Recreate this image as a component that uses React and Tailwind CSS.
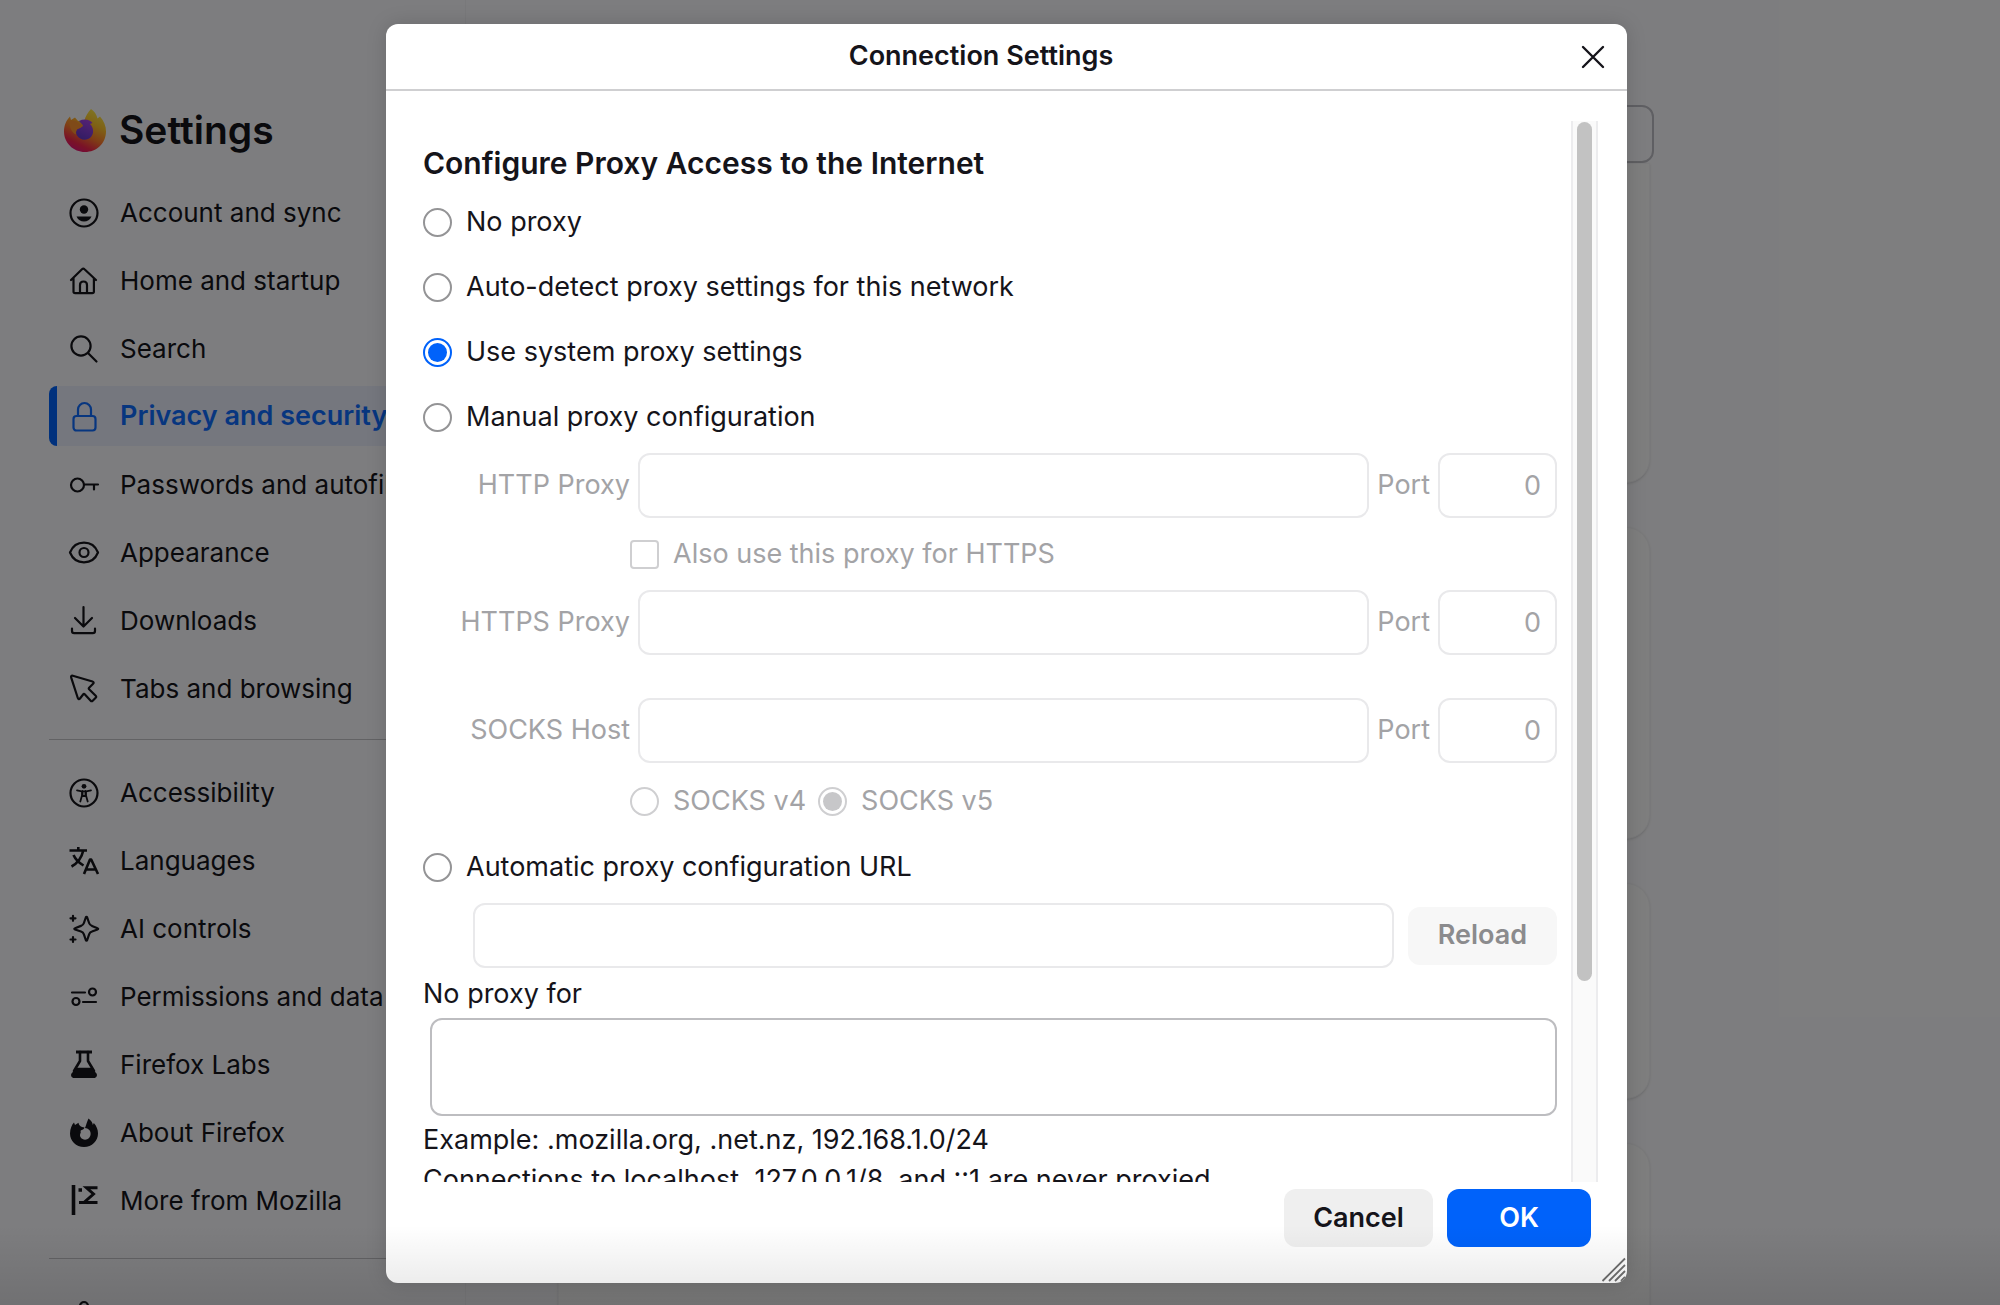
import React, { useState } from 'react';

const Icon = ({ children, size = 28 }) => (
  <svg
    width={size}
    height={size}
    viewBox="0 0 28 28"
    fill="none"
    stroke="currentColor"
    strokeWidth="2.2"
    strokeLinecap="round"
    strokeLinejoin="round"
    className="shrink-0 overflow-visible"
    aria-hidden="true"
  >
    {children}
  </svg>
);

const icons = {
  account: (
    <Icon>
      <circle cx="14" cy="14" r="13.500" />
      <circle cx="14" cy="10.500" r="4.200" fill="currentColor" stroke="none" />
      <path d="M6.500 17.500h15c-1.400 3.200-4.200 5-7.500 5s-6.100-1.800-7.500-5z" fill="currentColor" stroke="none" />
    </Icon>
  ),
  home: (
    <Icon>
      <path d="M1 13 12 2.200c.8-.8 1.700-.8 2.500 0L26 13M3.500 11v13.500c0 1 .7 1.700 1.700 1.700h17c1 0 1.700-.7 1.700-1.700V11" />
      <path d="M10 26v-8c0-2 1.300-3.500 3.500-3.500S17 16 17 18v8" />
    </Icon>
  ),
  search: (
    <Icon>
      <circle cx="11" cy="11" r="9.600" />
      <path d="m18 18 8.500 8.500" />
    </Icon>
  ),
  lock: (
    <Icon>
      <rect x="3.500" y="13" width="22" height="14.500" rx="3" />
      <path d="M8 13V6.500a6.500 6.500 0 0 1 13 0V13" />
    </Icon>
  ),
  key: (
    <Icon>
      <circle cx="7.500" cy="14" r="6.500" />
      <path d="M14 13.500h14M24 13.500v5" />
    </Icon>
  ),
  eye: (
    <Icon>
      <path d="M0 13.500C2.500 7.300 8 3.700 14 3.700s11.500 3.600 14 9.800C25.500 19.700 20 23.300 14 23.300S2.500 19.700 0 13.500z" />
      <circle cx="14" cy="13.500" r="4.500" />
    </Icon>
  ),
  download: (
    <Icon>
      <path d="M13.500 0v18.500M5 11l8.500 8.500L22 11M2 21.500V24c0 1.300.9 2.200 2.200 2.200h18.600c1.300 0 2.200-.9 2.200-2.200v-2.500" />
    </Icon>
  ),
  cursor: (
    <Icon>
      <path d="M2.800.8 22.500 6.500c1.300.4 1.500 1.400.6 2.200l-4 4c-.5.5-.5 1 0 1.500l6.600 6.500c.7.700.7 1.400 0 2l-3 3c-.7.700-1.400.7-2 0l-6-6.500c-.5-.5-1-.4-1.400.1L10 23.500c-.8 1-1.800.8-2.200-.5L1.200 2.600C.8 1.300 1.500.400 2.800.8z" />
    </Icon>
  ),
  accessibility: (
    <Icon>
      <circle cx="14" cy="14" r="13.500" />
      <circle cx="14" cy="7.300" r="2.400" fill="currentColor" stroke="none" />
      <path d="M7 11.300l4.700 1h4.600l4.700-1M12 12.500v4l-1.700 6M16 12.500v4l1.700 6M12.500 12v5h3v-5" strokeWidth="1.800" />
    </Icon>
  ),
  languages: (
    <Icon>
      <path
        d="M-.5 3.500H17M8.300 0v3.500M13.300 3.500C11.800 10 8 16 1.500 19.500M3.500 8c2 4.500 5 7.500 10 10.500"
        strokeWidth="2.600"
        strokeLinecap="butt"
      />
      <path d="m14 27 6-14.500h1.200L28 27M16.300 22.500h9.500" strokeWidth="2.600" strokeLinecap="butt" />
    </Icon>
  ),
  ai: (
    <Icon>
      <path d="M15.800 2.500c.4-1 1-1 1.400 0l1.900 5.500c.5 1.500 1.400 2.400 2.900 2.900l5.500 2.300c.9.300.9 1 0 1.300L22 16.500c-1.500.5-2.400 1.400-2.900 2.900l-1.900 5.600c-.4 1-1 1-1.400 0l-1.900-5.600c-.5-1.500-1.400-2.400-2.900-2.900L5 14.500c-.9-.3-.9-1 0-1.300l6-2.300c1.500-.5 2.400-1.400 2.900-2.900z" />
      <path d="M3 .8v5M.5 3.300h5M3 22v5M.5 24.500h5" />
    </Icon>
  ),
  permissions: (
    <Icon>
      <circle cx="22.500" cy="9" r="3.500" />
      <circle cx="6" cy="18.500" r="3.500" />
      <path d="M2 9.500h13M13 19h13" />
    </Icon>
  ),
  labs: (
    <Icon>
      <path d="M6 1h16" strokeWidth="3" strokeLinecap="butt" />
      <path d="M10 1v9L4 20M18 1v9l6 10" strokeWidth="2.600" />
      <path
        d="M6.500 16.800h15l5 5.700c1.200 2-.1 4.500-2.500 4.500H4c-2.400 0-3.700-2.500-2.500-4.500z"
        fill="currentColor"
        stroke="none"
      />
    </Icon>
  ),
  firefox: (
    <Icon>
      <path
        d="M18.500-.5c3 2.500 4 4 4.300 6.500l1-2C26.500 7 28 10.500 28 14.500 28 22 22 28 14 28S0 22 0 14.500C0 9.500 2 5.500 4 3.500L5 6l3.500-2.300c.3 2 1.300 3.300 3.500 4.300l2.500.5c-.4 1.800-1.600 2-3.300 2.800-.7.400-.7 1.200-.4 1.900-.8 2.200-1.300 3.300 0 5.300 1.700 2.500 5.700 3 8.200.5 2.300-2.300 2-6 .3-8-1-1.200-3-2-4.300-2C16 6.500 17 2.500 18.500-.5z"
        fill="currentColor"
        stroke="none"
      />
    </Icon>
  ),
  mozilla: (
    <Icon>
      <path d="M3.500-2v30" strokeWidth="3.600" strokeLinecap="butt" />
      <path d="M27.500.8H16.500l7 6.200-9.500 8.500h13.500M9 15.500h6" strokeWidth="3" strokeLinecap="butt" strokeLinejoin="miter" />
      <path d="M8.500 3h3.500" strokeWidth="3.500" strokeLinecap="butt" />
    </Icon>
  ),
  extensions: (
    <Icon>
      <path d="M3 9h7V5a4 4 0 0 1 8 0v4h7v17H3z" />
    </Icon>
  ),
};

const primaryNav = [
  { label: 'Account and sync', icon: 'account' },
  { label: 'Home and startup', icon: 'home' },
  { label: 'Search', icon: 'search' },
  { label: 'Privacy and security', icon: 'lock', active: true },
  { label: 'Passwords and autofill', icon: 'key' },
  { label: 'Appearance', icon: 'eye' },
  { label: 'Downloads', icon: 'download' },
  { label: 'Tabs and browsing', icon: 'cursor' },
];

const secondaryNav = [
  { label: 'Accessibility', icon: 'accessibility' },
  { label: 'Languages', icon: 'languages' },
  { label: 'AI controls', icon: 'ai' },
  { label: 'Permissions and data', icon: 'permissions' },
  { label: 'Firefox Labs', icon: 'labs' },
  { label: 'About Firefox', icon: 'firefox' },
  { label: 'More from Mozilla', icon: 'mozilla' },
];

const FirefoxLogo = () => (
  <svg width="44" height="44" viewBox="0 0 44 44" className="shrink-0" aria-hidden="true">
    <defs>
      <linearGradient id="fox" x1="0.85" y1="0" x2="0.35" y2="1">
        <stop offset="0" stopColor="#fff44f" />
        <stop offset="0.35" stopColor="#ffc22a" />
        <stop offset="0.62" stopColor="#ff7a2c" />
        <stop offset="0.85" stopColor="#f5264d" />
        <stop offset="1" stopColor="#e31577" />
      </linearGradient>
      <linearGradient id="globe" x1="0.7" y1="0" x2="0.3" y2="1">
        <stop offset="0" stopColor="#a845e8" />
        <stop offset="1" stopColor="#6438c8" />
      </linearGradient>
    </defs>
    <path
      d="M28 1c3 2 5.500 5 6.500 9.500L37 8.500c4 4.500 6 9.500 6 15C43 35.500 33.500 44 22 44S1 35 1 23.500C1 17 3.500 12 7 8.500l1 3.500 4-2.500 3 3.500 6 .5c1.500-5 4-9.500 7-12.500z"
      fill="url(#fox)"
    />
    <path
      d="M16 13c5-2.500 11-1.500 13.500 2L27 16c4 4 4 9.500 1 13-4 4-11 3.500-14-1.500-1-2-1.300-4-.5-6 1.500-1 4.500-1.500 6.500-3.500-1-2-2.500-3.500-4-5z"
      fill="url(#globe)"
    />
    <path d="M7 13c3.500-1 6.500 0 9 2.500l4 1.500c-1 2.500-4 3-6 4.500-.8 1.500-1.300 3-1 5-4-1.500-7.500-8-6-13.500z" fill="#ff9430" />
  </svg>
);

const NavItem = ({ label, icon, active }) => (
  <li>
    <a
      href="#"
      aria-current={active ? 'page' : undefined}
      className={
        active
          ? 'flex h-15 items-center gap-[22px] rounded-lg border-l-8 border-[#0062fa] bg-[#eaeefd] pt-px pl-[13px] text-[27px] font-semibold text-[#0f6cff]'
          : 'flex h-15 items-center gap-[22px] pt-px pl-[21px]'
      }
    >
      {icons[icon]}
      <span className="whitespace-nowrap">{label}</span>
    </a>
  </li>
);

const SettingsPage = () => (
  <div className="flex h-full overflow-hidden bg-[#fbfbfe]">
    <aside className="w-[466px] shrink-0 border-r border-[#f3f3f6] pl-[49px] pt-[104px] pr-9">
      <h1 className="flex h-13 items-center gap-3 pl-[14px] text-[39px] font-semibold">
        <FirefoxLogo />
        Settings
      </h1>
      <nav aria-label="Settings" className="mt-[26px] text-[26px]">
        <ul className="flex flex-col gap-2">
          {primaryNav.map((item) => (
            <NavItem key={item.label} {...item} />
          ))}
        </ul>
        <hr className="mt-[21px] mb-[22px] border-[#c4c4c8]" />
        <ul className="flex flex-col gap-2">
          {secondaryNav.map((item) => (
            <NavItem key={item.label} {...item} />
          ))}
        </ul>
        <hr className="mt-7 border-[#c4c4c8]" />
        <div className="mt-[42px] pl-[21px]">{icons.extensions}</div>
      </nav>
    </aside>

    <main className="flex-1 pl-[92px] pr-[346px] pt-[105px]">
      <input
        type="search"
        aria-label="Search settings"
        className="block h-[58px] w-full rounded-xl border-2 border-[#bfbfc6]"
      />
      <div className="mr-1 flex flex-col gap-11">
        <section className="h-[320px] rounded-b-3xl border border-[#f4f4f6] bg-[#fdfdfd] shadow-sm" />
        <section className="h-[312px] rounded-3xl border border-[#f4f4f6] bg-[#fdfdfd] shadow-sm" />
        <section className="h-[216px] rounded-3xl border border-[#f4f4f6] bg-[#fdfdfd] shadow-sm" />
        <section className="h-[216px] rounded-3xl border border-[#f4f4f6] bg-[#fdfdfd] shadow-sm" />
      </div>
    </main>
  </div>
);

const radioClass =
  'grid size-[29px] shrink-0 appearance-none place-content-center rounded-full border-2 border-[#949496] bg-white before:size-[19px] before:rounded-full checked:border-[#0062fa] checked:before:bg-[#0062fa] disabled:border-[#cfcfd1] disabled:checked:before:bg-[#c7c7c9]';

const Radio = ({ label, ...props }) => (
  <label className="flex items-center gap-[14px] whitespace-nowrap">
    <input type="radio" className={radioClass} {...props} />
    {label}
  </label>
);

const fieldClass = 'h-[65px] rounded-xl border-2 border-[#e9e9eb] bg-white px-[14px] text-[#a3a3a6]';

const ProxyRow = ({ id, label }) => (
  <div className="flex items-center gap-2 text-[#a3a3a6]">
    <label htmlFor={id} className="w-[207px] text-right whitespace-nowrap">
      {label}
    </label>
    <input id={id} type="text" disabled className={`${fieldClass} min-w-0 flex-1`} />
    <label htmlFor={`${id}-port`}>Port</label>
    <input id={`${id}-port`} type="text" disabled defaultValue="0" className={`${fieldClass} w-[119px] text-right`} />
  </div>
);

const ConnectionSettings = () => {
  const [mode, setMode] = useState('system');

  const modeProps = (value) => ({
    name: 'proxy-mode',
    checked: mode === value,
    onChange: () => setMode(value),
  });

  return (
    <div
      role="dialog"
      aria-labelledby="dialog-title"
      className="relative flex min-w-0 flex-1 flex-col overflow-hidden rounded-xl bg-white text-[27px] shadow-[0_0_20px_rgba(0,0,0,0.15)]"
    >
      {/* Title bar */}
      <div className="flex h-[67px] shrink-0 items-center border-b-2 border-[#cfcfd1] pr-[21px]">
        <h2 id="dialog-title" className="flex-1 text-center font-semibold">
          Connection Settings
        </h2>
        <button type="button" aria-label="Close" className="pl-1">
          <svg
            width="26"
            height="26"
            viewBox="0 0 26 26"
            stroke="currentColor"
            strokeWidth="2.400"
            strokeLinecap="round"
            aria-hidden="true"
          >
            <path d="m3 3 20 20M23 3 3 23" />
          </svg>
        </button>
      </div>

      {/* Scrolling body */}
      <div className="mt-[30px] mr-[29px] ml-[37px] flex min-h-0 flex-1">
        <div className="min-w-0 flex-1 overflow-hidden pr-[14px]">
          <h3 className="mt-[22px] text-[30px] leading-10 font-semibold">
            Configure Proxy Access to the Internet
          </h3>
          <div className="mt-[19px] flex flex-col gap-[25px] leading-10">
            <Radio label="No proxy" {...modeProps('none')} />
            <Radio label="Auto-detect proxy settings for this network" {...modeProps('auto')} />
            <Radio label="Use system proxy settings" {...modeProps('system')} />
            <Radio label="Manual proxy configuration" {...modeProps('manual')} />
          </div>

          <div className="mt-4">
            <ProxyRow id="http" label="HTTP Proxy" />
            <label className="my-4 ml-[207px] flex h-10 items-center gap-[14px] text-[#a3a3a6]">
              <input
                type="checkbox"
                disabled
                className="size-[29px] shrink-0 appearance-none rounded border-2 border-[#cfcfd1] bg-white"
              />
              Also use this proxy for HTTPS
            </label>
            <ProxyRow id="https" label="HTTPS Proxy" />
            <div className="mt-[43px]">
              <ProxyRow id="socks" label="SOCKS Host" />
            </div>
            <div className="mt-[18px] ml-[207px] flex h-10 items-center gap-3 text-[#a3a3a6]">
              <Radio label="SOCKS v4" name="socks-version" disabled />
              <Radio label="SOCKS v5" name="socks-version" disabled defaultChecked />
            </div>
          </div>

          <div className="mt-[26px] leading-10">
            <Radio label="Automatic proxy configuration URL" {...modeProps('url')} />
          </div>
          <div className="mt-4 ml-[50px] flex items-center gap-[14px]">
            <input
              type="text"
              aria-label="Automatic proxy configuration URL"
              disabled
              className={`${fieldClass} min-w-0 flex-1`}
            />
            <button
              type="button"
              disabled
              className="h-[58px] w-[149px] rounded-xl bg-[#f7f7f7] font-semibold text-[#8b8b8d]"
            >
              Reload
            </button>
          </div>

          <label htmlFor="no-proxy" className="mt-[6px] block leading-10">
            No proxy for
          </label>
          <textarea
            id="no-proxy"
            className="mt-1 ml-[7px] block h-[98px] w-[calc(100%-7px)] resize-none rounded-xl border-2 border-[#bdbdc0] px-3 py-2"
          />
          <p className="mt-1 leading-10">Example: .mozilla.org, .net.nz, 192.168.1.0/24</p>
          <p className="leading-10 whitespace-nowrap">
            Connections to localhost, 127.0.0.1/8, and ::1 are never proxied.
          </p>
        </div>
        <div className="w-[27px] shrink-0 border-x-2 border-[#ececee] bg-[#fafafa] px-1 pt-px">
          <div className="h-[81%] rounded-full bg-[#c2c2c2]" />
        </div>
      </div>

      {/* Footer buttons */}
      <div className="mt-[7px] mr-9 mb-9 flex shrink-0 justify-end gap-[14px] font-semibold">
        <button type="button" className="h-[58px] w-[149px] rounded-xl bg-[#efefef]">
          Cancel
        </button>
        <button type="button" className="h-[58px] w-[144px] rounded-xl bg-[#0062fa] text-white">
          OK
        </button>
      </div>

      <svg
        width="26"
        height="26"
        viewBox="0 0 26 26"
        stroke="#6f6f6f"
        strokeWidth="1.800"
        className="absolute right-0 bottom-0"
        aria-hidden="true"
      >
        <path d="M1.500 24 24 1.500M8 24 24 8M14 24 24 14M20 24l4-4" />
      </svg>
    </div>
  );
};

export default function App() {
  return (
    <div className="relative h-screen overflow-hidden font-['Inter',sans-serif] text-[#15141a]">
      <SettingsPage />
      <div className="absolute inset-0 flex bg-black/50 pt-6 pr-[373px] pb-[22px] pl-[386px]">
        <ConnectionSettings />
      </div>
      <div className="pointer-events-none absolute inset-x-0 bottom-0 h-20 bg-linear-to-b from-transparent to-black/10" />
    </div>
  );
}
